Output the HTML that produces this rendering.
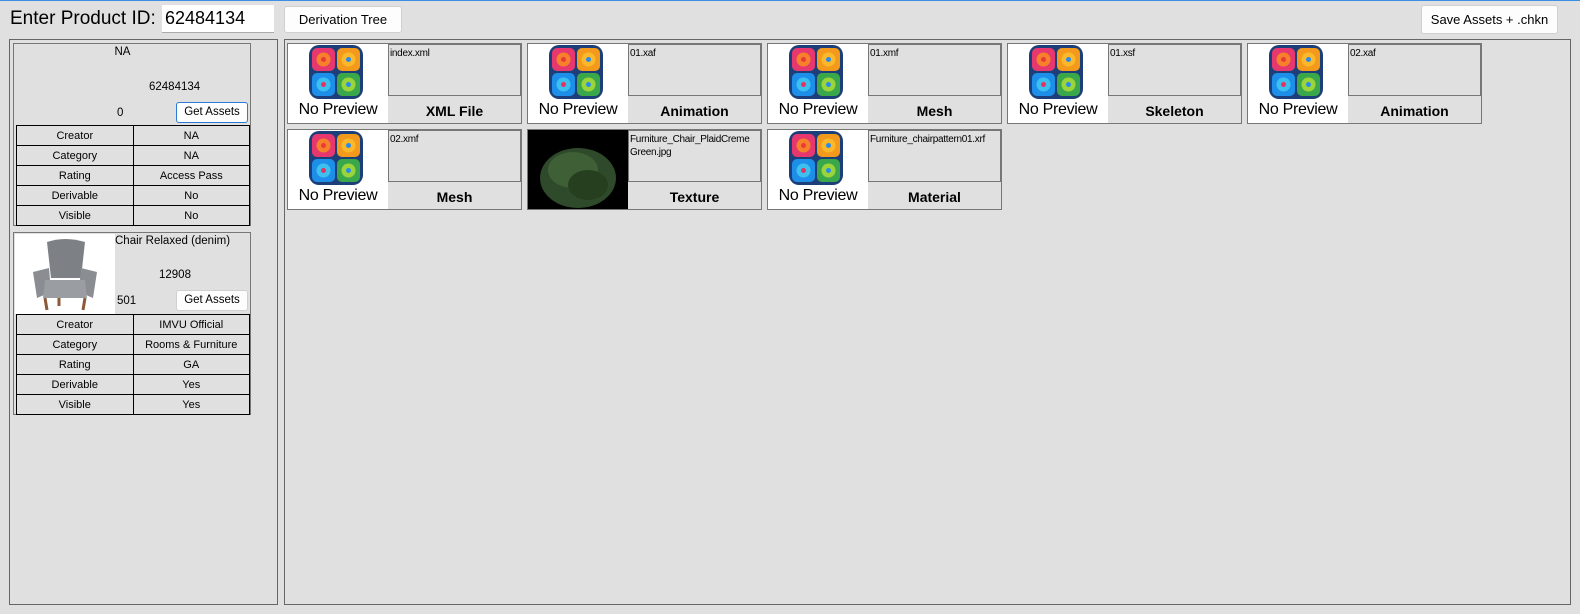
<!DOCTYPE html>
<html><head><meta charset="utf-8"><style>
body{margin:0;width:1580px;height:614px;background:#e0e0e0;font-family:"Liberation Sans",sans-serif;position:relative;overflow:hidden;color:#000}
.a{position:absolute}
.btn{position:absolute;background:#fdfdfd;border:1px solid #d0d0d0;border-radius:3px;font-size:13px;text-align:center;box-sizing:border-box}
.panel{position:absolute;border:1px solid #666;box-sizing:border-box}
.card{position:absolute;border:1px solid #777;box-sizing:border-box;font-size:11.5px}
table{position:absolute;border-collapse:collapse;font-size:11px}
td{border:1px solid #000;height:19px;padding:0;text-align:center;width:117px}
.tile{position:absolute;width:235px;height:81px;border:1px solid #777;box-sizing:border-box}
.ic{position:absolute;left:0;top:0;width:100px;height:79px;background:#fff}
.ic svg{position:absolute;left:20px;top:0}
.np{position:absolute;left:0;top:57px;width:100px;text-align:center;font-size:16px;letter-spacing:-0.3px}
.tb{position:absolute;left:100px;top:0;width:133px;height:52px;border:1px solid #777;box-sizing:border-box;font-size:10px;padding:2px 1px;line-height:13px;letter-spacing:-0.3px;overflow:hidden}
.lb{position:absolute;left:100px;top:59px;width:133px;text-align:center;font-weight:bold;font-size:14px}
</style></head><body>
<div class="a" style="left:0;top:0;width:1580px;height:1px;background:#3a8ee6"></div>
<div class="a" style="left:10px;top:8px;font-size:19px">Enter Product ID:</div>
<div class="a" style="left:162px;top:5px;width:112px;height:28px;background:#fff;border-bottom:1px solid #aaa;box-sizing:border-box;font-size:18px;padding:3px 3px">62484134</div>
<div class="btn" style="left:284px;top:6px;width:118px;height:27px;line-height:25px">Derivation Tree</div>
<div class="btn" style="left:1421px;top:5px;width:137px;height:29px;line-height:27px">Save Assets + .chkn</div>

<div class="panel" style="left:9px;top:39px;width:269px;height:566px"></div>
<div class="panel" style="left:284px;top:39px;width:1287px;height:566px"></div>

<div class="card" style="left:13px;top:43px;width:238px;height:183px">
 <div class="a" style="left:0;top:2px;width:217px;text-align:center">NA</div>
 <div class="a" style="left:135px;top:37px">62484134</div>
 <div class="a" style="left:103px;top:63px">0</div>
 <div class="btn" style="left:162px;top:58px;width:72px;height:21px;line-height:19px;border-color:#2a7ad6;font-size:11.5px">Get Assets</div>
 <table style="left:2px;top:81px"><tr><td>Creator</td><td>NA</td></tr><tr><td>Category</td><td>NA</td></tr><tr><td>Rating</td><td>Access Pass</td></tr><tr><td>Derivable</td><td>No</td></tr><tr><td>Visible</td><td>No</td></tr></table>
</div>

<div class="card" style="left:13px;top:232px;width:238px;height:183px">
 <div class="a" style="left:1px;top:1px;width:100px;height:80px;background:#fff">
  <svg width="100" height="80"><path d="M32 8 Q50 2 70 8 L66 44 L36 44Z" fill="#7d8084"/><path d="M18 38 L34 34 L36 58 L22 64Z" fill="#8a8d91"/><path d="M66 34 L82 38 L78 64 L64 58Z" fill="#8a8d91"/><path d="M30 46 L70 46 L72 64 L28 64Z" fill="#9a9da1"/><path d="M30 64 L32 76 M70 64 L68 76 M44 64 L44 72" stroke="#8b5a3a" stroke-width="3"/></svg>
 </div>
 <div class="a" style="left:101px;top:2px">Chair Relaxed (denim)</div>
 <div class="a" style="left:145px;top:36px">12908</div>
 <div class="a" style="left:103px;top:62px">501</div>
 <div class="btn" style="left:162px;top:57px;width:72px;height:21px;line-height:19px;font-size:11.5px">Get Assets</div>
 <table style="left:2px;top:81px"><tr><td>Creator</td><td>IMVU Official</td></tr><tr><td>Category</td><td>Rooms &amp; Furniture</td></tr><tr><td>Rating</td><td>GA</td></tr><tr><td>Derivable</td><td>Yes</td></tr><tr><td>Visible</td><td>Yes</td></tr></table>
</div>

<svg width="0" height="0" style="position:absolute"><defs>
<g id="logo"><rect x="1" y="1" width="54" height="54" rx="10" fill="#1c3f7a"/>
<rect x="4" y="4" width="23" height="23" rx="5" fill="#e6386e"/><circle cx="15.5" cy="15.5" r="7" fill="#f7812a"/><circle cx="15.5" cy="15.5" r="2.5" fill="#e83a3a"/>
<rect x="29" y="4" width="23" height="23" rx="5" fill="#f39a1c"/><circle cx="40.5" cy="15.5" r="7" fill="#fbb82a"/><circle cx="40.5" cy="15.5" r="2.5" fill="#2a8be8"/>
<rect x="4" y="29" width="23" height="23" rx="5" fill="#1e8fe8"/><circle cx="15.5" cy="40.5" r="7" fill="#3cc0f0"/><circle cx="15.5" cy="40.5" r="2.5" fill="#e8325a"/>
<rect x="29" y="29" width="23" height="23" rx="5" fill="#3aa84a"/><circle cx="40.5" cy="40.5" r="7" fill="#9ad43a"/><circle cx="40.5" cy="40.5" r="2.5" fill="#2a8be8"/></g></defs></svg>

<div class="tile" style="left:287px;top:43px"><div class="ic"><svg width="58" height="58"><use href="#logo"/></svg><div class="np">No Preview</div></div><div class="tb">index.xml</div><div class="lb">XML File</div></div>
<div class="tile" style="left:527px;top:43px"><div class="ic"><svg width="58" height="58"><use href="#logo"/></svg><div class="np">No Preview</div></div><div class="tb">01.xaf</div><div class="lb">Animation</div></div>
<div class="tile" style="left:767px;top:43px"><div class="ic"><svg width="58" height="58"><use href="#logo"/></svg><div class="np">No Preview</div></div><div class="tb">01.xmf</div><div class="lb">Mesh</div></div>
<div class="tile" style="left:1007px;top:43px"><div class="ic"><svg width="58" height="58"><use href="#logo"/></svg><div class="np">No Preview</div></div><div class="tb">01.xsf</div><div class="lb">Skeleton</div></div>
<div class="tile" style="left:1247px;top:43px"><div class="ic"><svg width="58" height="58"><use href="#logo"/></svg><div class="np">No Preview</div></div><div class="tb">02.xaf</div><div class="lb">Animation</div></div>
<div class="tile" style="left:287px;top:129px"><div class="ic"><svg width="58" height="58"><use href="#logo"/></svg><div class="np">No Preview</div></div><div class="tb">02.xmf</div><div class="lb">Mesh</div></div>
<div class="tile" style="left:527px;top:129px"><div class="ic" style="background:#000"><svg width="100" height="79" style="left:0"><ellipse cx="50" cy="48" rx="38" ry="30" fill="#2f4a2a"/><ellipse cx="45" cy="40" rx="25" ry="18" fill="#3f5f36"/><ellipse cx="60" cy="55" rx="20" ry="15" fill="#26401f"/></svg></div><div class="tb">Furniture_Chair_PlaidCreme Green.jpg</div><div class="lb">Texture</div></div>
<div class="tile" style="left:767px;top:129px"><div class="ic"><svg width="58" height="58"><use href="#logo"/></svg><div class="np">No Preview</div></div><div class="tb">Furniture_chairpattern01.xrf</div><div class="lb">Material</div></div>
</body></html>
